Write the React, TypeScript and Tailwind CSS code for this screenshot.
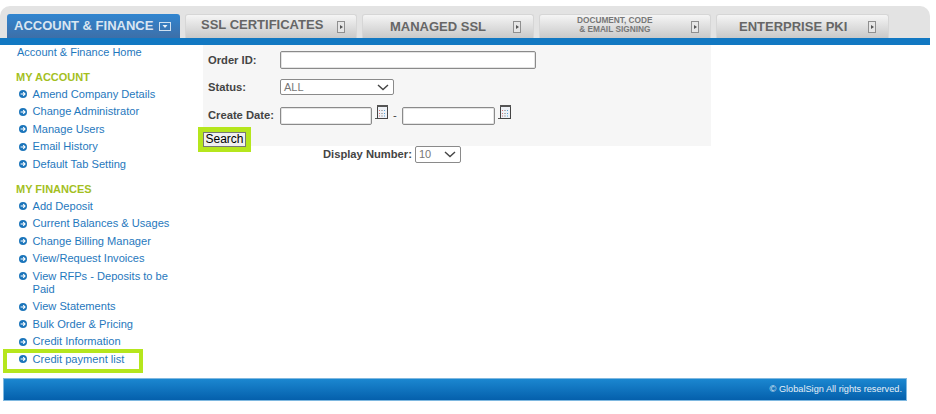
const myAccount = ['Amend Company Details', 'Change Administrator', 'Manage Users', 'Email History', 'Default Tab Setting']
const myFinances = [
  'Add Deposit',
  'Current Balances & Usages',
  'Change Billing Manager',
  'View/Request Invoices',
  'View RFPs - Deposits to be Paid',
  'View Statements',
  'Bulk Order & Pricing',
  'Credit Information',
]

function Bullet() {
  return (
    <svg width="8" height="8" viewBox="0 0 8 8" className="mt-[2.5px] shrink-0">
      <circle cx="4" cy="4" r="4" fill="#1b75bb" />
      <path d="M1.6 4H6M4.2 2.2 6 4 4.2 5.8" stroke="#fff" strokeWidth="1.1" fill="none" />
    </svg>
  )
}

function NavLink({ label }: { label: string }) {
  return (
    <li className="flex gap-[5.5px] pr-[25px] pb-[4.5px] pl-[19px] text-[11.1px] leading-[13px] text-[#1f78bd]">
      <Bullet />
      <span>{label}</span>
    </li>
  )
}

function TabIcon({ down }: { down?: boolean }) {
  if (down) {
    return (
      <svg width="12" height="9" viewBox="0 0 12 9" className="shrink-0">
        <rect x="0.5" y="0.5" width="11" height="8" fill="none" stroke="#cfe0f0" />
        <path d="M3.5 3h5L6 6z" fill="#e8f0f8" />
      </svg>
    )
  }
  return (
    <svg width="8" height="12" viewBox="0 0 8 12" className="shrink-0">
      <rect x="0.5" y="0.5" width="7" height="11" fill="#e6e6e6" stroke="#8f8f8f" />
      <path d="M3 4v4l3-2z" fill="#555" />
    </svg>
  )
}

function CalendarIcon() {
  return (
    <svg width="13" height="15" viewBox="0 0 13 15" className="mt-[-3px] mb-[3px] ml-[3px] shrink-0">
      <path d="M0 13.5h12" stroke="#555" />
      <rect x="2.5" y="0.5" width="10" height="13" fill="#eef1f6" stroke="#444" />
      <rect x="2" y="0" width="11" height="2" fill="#555" />
      <path d="M4.5 5v1M4.5 8v1M4.5 10.5v1" stroke="#d9767a" />
      <path d="M7 5v1M7 8v1M7 10.5v1" stroke="#777" />
      <path d="M9.5 5v1M9.5 8v1M9.5 10.5v1" stroke="#5aa7dc" />
    </svg>
  )
}

function Tab({ children, width = 'w-[172px]', iconMargin = 'mr-[12px]' }: { children: React.ReactNode; width?: string; iconMargin?: string }) {
  return (
    <div className={`flex h-[24px] items-center rounded-t-[3px] border border-b-0 border-[#d6d6d6] bg-gradient-to-b from-[#f5f5f5] to-[#c9c9c9] ${width}`}>
      {children}
      <div className={`ml-auto ${iconMargin}`}>
        <TabIcon />
      </div>
    </div>
  )
}

function TextBox({ className }: { className: string }) {
  return <div className={`rounded-[2px] border border-[#8a8a8a] bg-white shadow-[inset_0_0_0_1px_#e4e4e4] ${className}`} />
}

function SelectBox({ value, className }: { value: string; className: string }) {
  return (
    <div className={`flex items-center justify-between rounded-[2px] border border-[#8a8a8a] bg-white pr-[4px] pl-[3px] text-[11px] text-[#777] ${className}`}>
      <span>{value}</span>
      <svg width="12" height="7" viewBox="0 0 12 7">
        <path d="M1 1l5 4.5L11 1" stroke="#444" strokeWidth="1.4" fill="none" />
      </svg>
    </div>
  )
}

export default function App() {
  return (
    <div className="h-[414px] w-[936px] overflow-hidden bg-white pt-[6px] font-['Liberation_Sans',Arial,sans-serif]">
      <div className="w-[930px] rounded-t-[10px] bg-[#e3e3e3] pt-[8px]">
        <div className="flex items-end gap-[5px] pl-[7px]">
          <div className="flex h-[24px] w-[173px] items-center gap-[6px] rounded-t-[3px] bg-gradient-to-b from-[#2f85d0] to-[#3d6fa8] pl-[7px]">
            <span className="text-[13px] font-bold whitespace-nowrap text-[#d9e6f2]">ACCOUNT &amp; FINANCE</span>
            <TabIcon down />
          </div>
          <Tab iconMargin="mr-[11px]">
            <span className="mb-[3px] ml-[15px] text-[13px] font-bold whitespace-nowrap text-[#666]">SSL CERTIFICATES</span>
          </Tab>
          <Tab>
            <span className="ml-[27px] text-[13px] font-bold whitespace-nowrap text-[#666]">MANAGED SSL</span>
          </Tab>
          <Tab iconMargin="mr-[11px]">
            <span className="mb-[4px] ml-[37px] text-center text-[8.3px] leading-[9px] font-bold whitespace-nowrap text-[#777]">
              DOCUMENT, CODE
              <br />
              &amp; EMAIL SIGNING
            </span>
          </Tab>
          <Tab width="w-[173px]">
            <span className="ml-[22px] text-[13px] font-bold whitespace-nowrap text-[#666]">ENTERPRISE PKI</span>
          </Tab>
        </div>
        <div className="h-[7px] bg-[#1278c2]" />
      </div>

      <div className="flex h-[333px] items-start">
        <aside className="w-[203px] shrink-0 pt-[0.5px]">
          <div className="pl-[17px] text-[11px] leading-[13px] text-[#1f78bd]">Account &amp; Finance Home</div>
          <h3 className="mt-[12px] mb-[4px] pl-[16px] text-[11px] leading-[13px] font-bold text-[#a4bf1f]">MY ACCOUNT</h3>
          <ul>
            {myAccount.map((label) => (
              <NavLink key={label} label={label} />
            ))}
          </ul>
          <h3 className="mt-[7.5px] mb-[4px] pl-[16px] text-[11px] leading-[13px] font-bold text-[#a4bf1f]">MY FINANCES</h3>
          <ul>
            {myFinances.map((label) => (
              <NavLink key={label} label={label} />
            ))}
          </ul>
          <div className="mt-[-4px] ml-[3px] flex h-[24px] w-[140px] gap-[5.5px] border-4 border-[#b5e61d] pl-[12px] text-[11.1px] leading-[13px] whitespace-nowrap text-[#1f78bd]">
            <Bullet />
            <span>Credit payment list</span>
          </div>
        </aside>

        <main className="text-[11.2px] font-bold text-[#444]">
          <div className="flex h-[101px] w-[508px] flex-col bg-[#f6f6f6]">
            <div className="mt-[6px] flex items-center">
              <span className="w-[77px] pl-[5px]">Order ID:</span>
              <TextBox className="h-[18px] w-[256px]" />
            </div>
            <div className="mt-[10px] flex items-center">
              <span className="w-[77px] pl-[5px]">Status:</span>
              <SelectBox value="ALL" className="h-[16px] w-[114px] font-normal" />
            </div>
            <div className="mt-[11px] flex items-center">
              <span className="w-[77px] pl-[5px]">Create Date:</span>
              <TextBox className="h-[18px] w-[92px]" />
              <CalendarIcon />
              <span className="ml-[5px] w-[9px] font-normal">-</span>
              <TextBox className="h-[18px] w-[93px]" />
              <CalendarIcon />
            </div>
            <div className="mt-[7px] h-[15px] w-[43px] border border-[#777] bg-[#f0f0f0] text-center text-[12px] leading-[13px] font-normal text-black outline-[5px] outline-[#b5e61d]">
              Search
            </div>
          </div>
          <div className="ml-[120px] flex items-center gap-[3px]">
            <span>Display Number:</span>
            <SelectBox value="10" className="h-[17px] w-[46px] font-normal" />
          </div>
        </main>
      </div>

      <footer className="ml-[3px] flex h-[23px] w-[904px] items-center justify-end border border-[#7fb8e0] bg-gradient-to-b from-[#1b87d0] to-[#0560ac] pr-[4px] text-[9.2px] text-[#e6f0f8]">
        © GlobalSign All rights reserved.
      </footer>
    </div>
  )
}
